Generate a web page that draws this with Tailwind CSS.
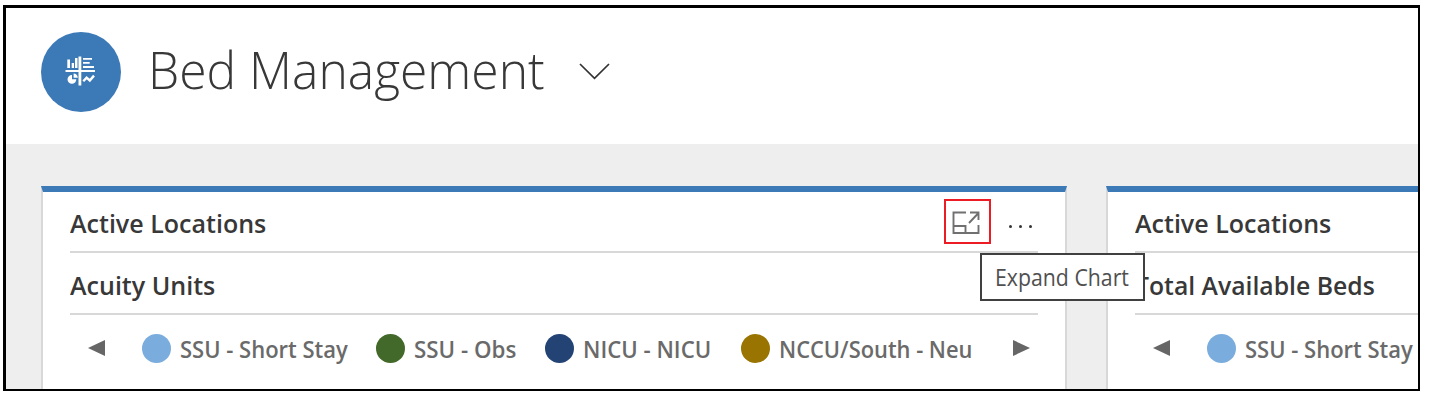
<!DOCTYPE html>
<html lang="en">
<head>
<meta charset="utf-8">
<title>Bed Management</title>
<script src="https://cdn.jsdelivr.net/npm/@tailwindcss/browser@4"></script>
</head>
<body class="bg-white w-[1429px] h-[405px] overflow-hidden pl-[3px] pt-[5px] font-['Open_Sans','Noto_Sans',sans-serif] text-[#383838]">
<div class="relative w-[1417px] h-[386px] border-black border-l-[3px] border-t-[3px] border-r-2 border-b-2 bg-[#eeeeee] overflow-hidden flex flex-col">
  <header class="h-[136px] shrink-0 bg-white flex items-start pl-[35px]">
    <div class="mt-6 size-20 rounded-full bg-[#3b79b7] shrink-0">
      <svg class="size-20" viewBox="0 0 80 80" fill="#fff">
        <path d="M24.500 38h29.500v2h-29.500zM37.500 24.500h2.800v29h-2.800zM26.300 27.500h2.700v8.500h-2.700zM30.700 31h2.300v5h-2.300zM34 26h2.500v10h-2.500zM42 26h9v1.700h-9zM42 30h6.700v1.800h-6.700zM42 34h11v2h-11z"/>
        <path d="M31 43v4.300h4.300a4.400 4.400 0 1 1-4.300-4.300zM32.600 41.600a4.200 4.200 0 0 1 4.200 4.200h-4.200z"/>
        <path d="M42.300 49.300l3.300-3.600 3.200 2.800 4.200-4.900" fill="none" stroke="#fff" stroke-width="2.400"/>
      </svg>
    </div>
    <h1 class="ml-[27px] mt-[29px] w-[400px] h-20 leading-[64px] text-[52px] font-light whitespace-nowrap origin-left scale-x-[0.957]">Bed Management</h1>
    <svg class="ml-[31px] mt-[54px] w-8 h-5" viewBox="0 0 32 20" fill="none" stroke="#333" stroke-width="1.700"><path d="M1 2l14.500 14.300L30 2"/></svg>
  </header>
  <main class="flex pl-[35px] pt-[42px] gap-[39px] items-start">
    <section class="w-[1026px] h-[300px] shrink-0 bg-white border-t-[6px] border-x-2 border-x-[#d8d8d8] border-t-[#3b79b7] px-[27px]">
      <div class="h-[61px] border-b-2 border-[#d8d8d8] flex items-start justify-between">
        <h2 class="mt-[13px] leading-9 text-[26px] font-semibold whitespace-nowrap origin-left scale-x-[0.963]">Active Locations</h2>
        <div class="flex items-start">
          <div class="mt-[7px] w-[47px] h-[45px] border-2 border-[#ed1c24]">
            <svg class="w-[43px] h-[41px]" viewBox="0 0 43 41" fill="none" stroke="#707070" stroke-width="1.900"><path d="M20 11.500H7.500v20.500h25V24M7.500 25H19.500v7M23 22L32.500 12M24 11.500h8.500V19"/></svg>
          </div>
          <svg class="mt-[30px] ml-[16px] mr-[3px] w-7 h-2" viewBox="0 0 28 8" fill="#333"><circle cx="3.500" cy="4.500" r="1.500"/><circle cx="13.500" cy="4.500" r="1.500"/><circle cx="23.500" cy="4.500" r="1.500"/></svg>
        </div>
      </div>
      <div class="h-[62px] border-b-2 border-[#d8d8d8]">
        <h3 class="pt-[14px] leading-9 text-[26px] font-semibold whitespace-nowrap origin-left scale-x-[0.963]">Acuity Units</h3>
      </div>
      <div class="h-[67px] flex items-center text-[23px] font-semibold text-[#6a6a6a] whitespace-nowrap">
        <svg class="ml-[18px] mb-[2px] w-[17px] h-4" viewBox="0 0 17 16" fill="#666"><path d="M17 0v16L0 8z"/></svg>
        <i class="ml-[37px] size-[29px] rounded-full bg-[#7aaddd]"></i><span class="ml-[9px] mt-px w-[196px] origin-left scale-x-[0.957]">SSU - Short Stay</span>
        <i class="size-[29px] rounded-full bg-[#42692a]"></i><span class="ml-[9px] mt-px w-[131px] origin-left scale-x-[0.971]">SSU - Obs</span>
        <i class="size-[29px] rounded-full bg-[#244375]"></i><span class="ml-[9px] mt-px w-[158px] origin-left scale-x-[0.966]">NICU - NICU</span>
        <i class="size-[29px] rounded-full bg-[#997400]"></i><span class="ml-[9px] mt-px w-[234px] origin-left scale-x-[0.951]">NCCU/South - Neu</span>
        <svg class="mb-[2px] w-[17px] h-4" viewBox="0 0 17 16" fill="#666"><path d="M0 0v16l17-8z"/></svg>
      </div>
    </section>
    <section class="w-[1026px] h-[300px] shrink-0 bg-white border-t-[6px] border-x-2 border-x-[#d8d8d8] border-t-[#3b79b7] px-[27px]">
      <div class="h-[61px] border-b-2 border-[#d8d8d8]">
        <h2 class="pt-[13px] leading-9 text-[26px] font-semibold whitespace-nowrap origin-left scale-x-[0.963]">Active Locations</h2>
      </div>
      <div class="h-[62px] border-b-2 border-[#d8d8d8]">
        <h3 class="pt-[14px] leading-9 text-[26px] font-semibold whitespace-nowrap origin-left scale-x-[0.952]">Total Available Beds</h3>
      </div>
      <div class="h-[67px] flex items-center text-[23px] font-semibold text-[#6a6a6a] whitespace-nowrap">
        <svg class="ml-[18px] mb-[2px] w-[17px] h-4" viewBox="0 0 17 16" fill="#666"><path d="M17 0v16L0 8z"/></svg>
        <i class="ml-[37px] size-[29px] rounded-full bg-[#7aaddd]"></i><span class="ml-[9px] mt-px origin-left scale-x-[0.957]">SSU - Short Stay</span>
      </div>
    </section>
  </main>
  <div class="absolute left-[974px] top-[245px] w-[165px] h-[48px] border-2 border-[#404040] bg-white pl-[13px] leading-[44px] text-[23px] text-[#505050] whitespace-nowrap"><span class="inline-block origin-left scale-x-[0.925]">Expand Chart</span></div>
</div>
</body>
</html>
